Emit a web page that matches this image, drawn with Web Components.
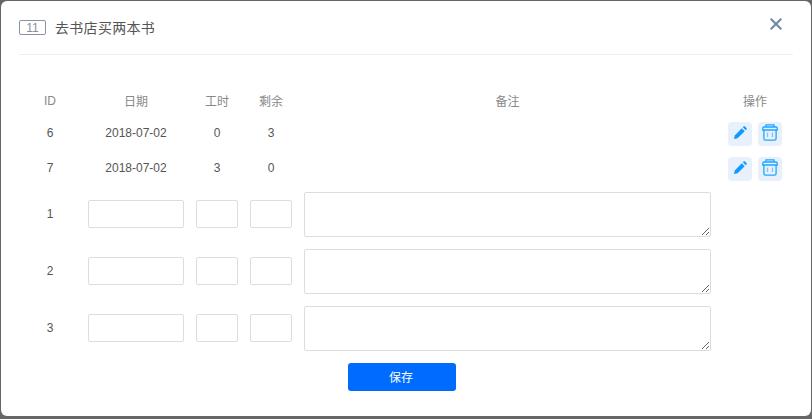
<!DOCTYPE html>
<html lang="zh">
<head>
<meta charset="utf-8">
<title>去书店买两本书</title>
<style>
  html, body { margin: 0; padding: 0; }
  body { font-family: "Liberation Sans", "Noto Sans CJK SC", sans-serif; }
</style>
</head>
<body>

<task-dialog heading="去书店买两本书" badge="11">
  <plan-row head><span>ID</span><span>日期</span><span>工时</span><span>剩余</span><span>备注</span><span>操作</span></plan-row>
  <plan-row tall="35"><span>6</span><span>2018-07-02</span><span>0</span><span>3</span><span></span><row-actions></row-actions></plan-row>
  <plan-row tall="35"><span>7</span><span>2018-07-02</span><span>3</span><span>0</span><span></span><row-actions></row-actions></plan-row>
  <plan-edit index="1"></plan-edit>
  <plan-edit index="2"></plan-edit>
  <plan-edit index="3"></plan-edit>
</task-dialog>

<script>
const COLUMNS = "52px 96px 42px 42px 407px 64px";

class TaskDialog extends HTMLElement {
  constructor() {
    super();
    this.attachShadow({ mode: "open" });
  }

  connectedCallback() {
    this.shadowRoot.innerHTML = `
      <style>
        :host {
          display: block;
          width: 812px;
          height: 419px;
          box-sizing: border-box;
          padding: 1px 1px 3px 1px;
          background: #666;
        }
        .box {
          height: 100%;
          box-sizing: border-box;
          background: #fff;
          border-radius: 6px;
          padding: 0 18px;
          display: flex;
          flex-direction: column;
        }
        header {
          height: 53px;
          flex: none;
          display: flex;
          align-items: center;
          border-bottom: 1px solid #eee;
          position: relative;
        }
        .badge {
          width: 25px;
          height: 13px;
          border: 1px solid #8a93a6;
          border-radius: 2px;
          color: #8a8f99;
          font-size: 12px;
          line-height: 15px;
          text-align: center;
        }
        h1 {
          margin: 0 0 2px 9px;
          font-size: 14px;
          font-weight: normal;
          letter-spacing: .3px;
          color: #555;
        }
        .close {
          position: absolute;
          right: 11px;
          top: 17px;
          width: 12px;
          height: 12px;
        }
        .rows {
          padding: 29px 0 0 5px;
        }
        ::slotted(plan-edit:first-of-type) {
          margin-top: 6px;
        }
        footer {
          display: flex;
          justify-content: center;
          padding-right: 8px;
        }
        button {
          width: 108px;
          height: 28px;
          padding: 0 2px 2px 0;
          border: 0;
          border-radius: 3px;
          background: #006cff;
          color: #fff;
          font: 12px "Liberation Sans", "Noto Sans CJK SC", sans-serif;
        }
      </style>
      <div class="box">
        <header>
          <span class="badge">${this.getAttribute("badge")}</span>
          <h1>${this.getAttribute("heading")}</h1>
          <svg class="close" viewBox="0 0 12 12"><path d="M.7 .7L11.300 11.300M11.300 .7L.7 11.300" stroke="#6f86a3" stroke-width="2" fill="none"/></svg>
        </header>
        <div class="rows"><slot></slot></div>
        <footer><button>保存</button></footer>
      </div>
    `;
  }
}

class PlanRow extends HTMLElement {
  constructor() {
    super();
    this.attachShadow({ mode: "open" });
  }

  connectedCallback() {
    const isHead = this.hasAttribute("head");
    const tall = this.getAttribute("tall") || "32";
    this.shadowRoot.innerHTML = `
      <style>
        :host {
          display: grid;
          grid-template-columns: ${COLUMNS};
          column-gap: 12px;
          align-items: center;
          justify-items: center;
          height: ${tall}px;
          font-size: 12px;
          color: ${isHead ? "#888" : "#555"};
        }
        ::slotted(span) {
          margin-bottom: ${isHead ? 0 : 2}px;
        }
        ::slotted(span:first-child) {
          margin-top: ${isHead ? 2 : 0}px;
        }
      </style>
      <slot></slot>
    `;
  }
}

class RowActions extends HTMLElement {
  constructor() {
    super();
    this.attachShadow({ mode: "open" });
  }

  connectedCallback() {
    this.shadowRoot.innerHTML = `
      <style>
        :host { display: flex; gap: 6px; }
        a {
          width: 24px;
          height: 24px;
          border-radius: 4px;
          background: #e8f1fb;
          display: flex;
          align-items: center;
          justify-content: center;
        }
        svg { display: block; margin-bottom: 3px; }
      </style>
      <a>
        <svg width="13" height="13" viewBox="0 0 13 13"><path d="M0 13l.7-3.600L7.800 2.300l2.900 2.900L3.600 12.300zM8.800 1.300l.8-.8c.4-.4 1-.4 1.400 0l1.500 1.500c.4 .4 .4 1 0 1.400l-.8 .8z" fill="#0f9bff"/></svg>
      </a>
      <a>
        <svg width="16" height="17" viewBox="0 0 16 17" fill="none" stroke="#1ea5ff" stroke-width="1.300">
          <path d="M4 3V.8h8V3"/>
          <path d="M.8 6V4.200q0-1.200 1.200-1.200h12q1.200 0 1.200 1.200V6z"/>
          <path d="M1.900 6v8.500q0 1.700 1.700 1.700h8.800q1.700 0 1.700-1.700V6"/>
          <path d="M5.500 8.500v4.500M10.500 8.500v4.500" stroke="#7cc6ff"/>
        </svg>
      </a>
    `;
  }
}

class PlanEdit extends HTMLElement {
  constructor() {
    super();
    this.attachShadow({ mode: "open" });
  }

  connectedCallback() {
    this.shadowRoot.innerHTML = `
      <style>
        :host {
          display: grid;
          grid-template-columns: ${COLUMNS};
          column-gap: 12px;
          align-items: center;
          margin-bottom: 12px;
          font-size: 12px;
          color: #555;
        }
        span { justify-self: center; margin-bottom: 2px; }
        input, textarea {
          display: block;
          box-sizing: border-box;
          width: 100%;
          margin: 0;
          padding: 0 6px;
          border: 1px solid #ddd;
          border-radius: 2px;
          outline: 0;
          background: #fff;
        }
        input { height: 28px; align-self: start; margin-top: 8px; }
        textarea { height: 45px; }
      </style>
      <span>${this.getAttribute("index")}</span>
      <input type="text">
      <input type="text">
      <input type="text">
      <textarea></textarea>
    `;
  }
}

customElements.define("task-dialog", TaskDialog);
customElements.define("plan-row", PlanRow);
customElements.define("row-actions", RowActions);
customElements.define("plan-edit", PlanEdit);
</script>
</body>
</html>
